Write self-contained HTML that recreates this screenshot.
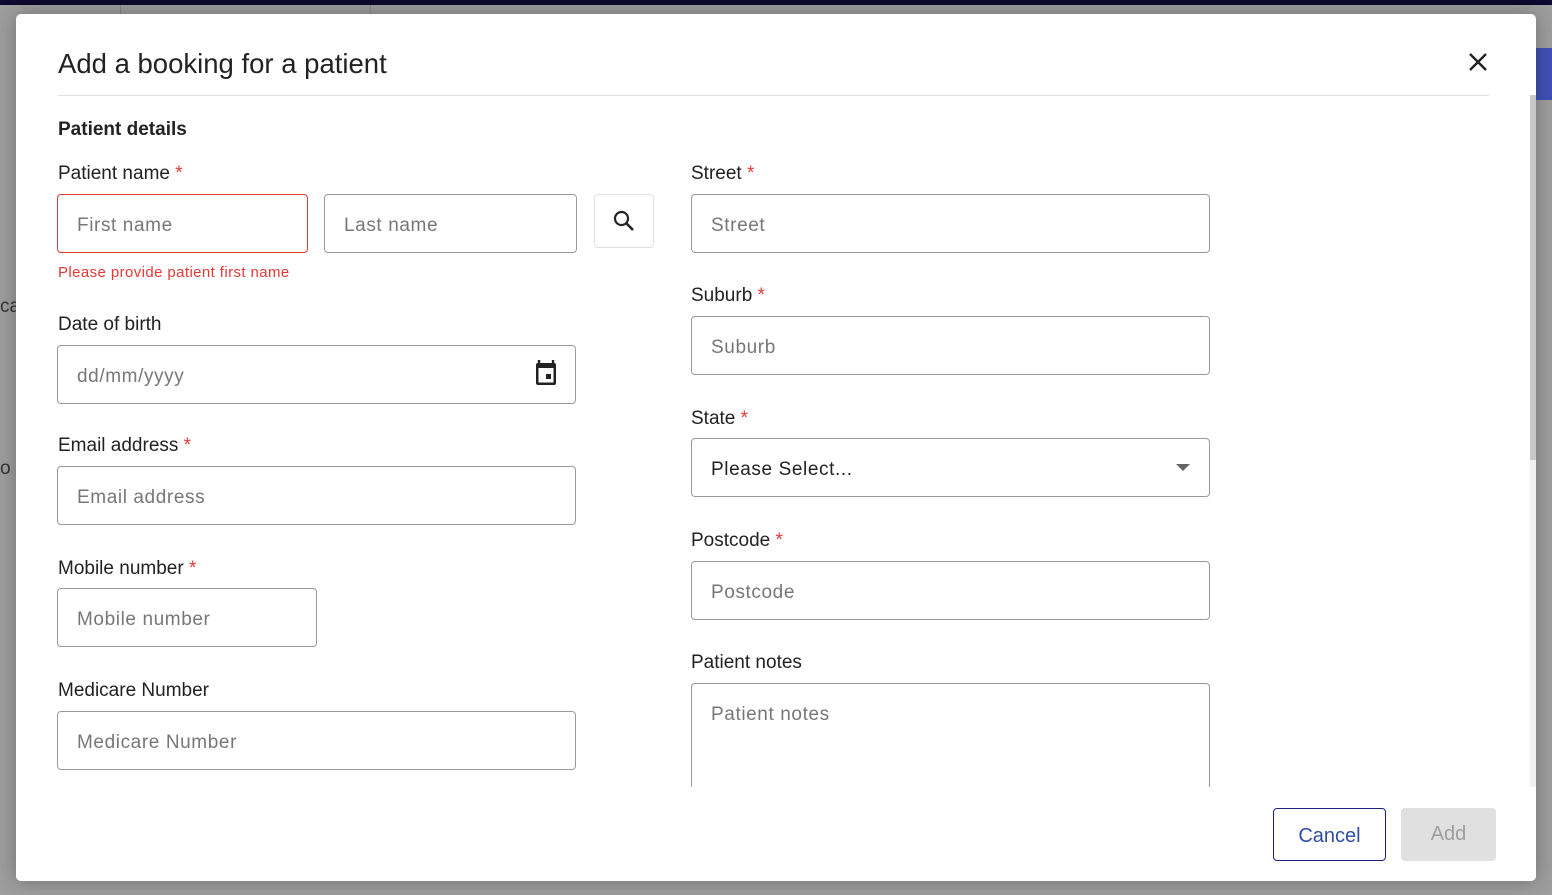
<!DOCTYPE html>
<html><head><style>
*{box-sizing:border-box;margin:0;padding:0}
body{width:1552px;height:895px;overflow:hidden;background:#9e9e9e;font-family:"Liberation Sans",sans-serif;position:relative}
.a{position:absolute}
.lbl{position:absolute;font-size:19px;color:#222;transform:translateY(2px)}
.req{color:#e53935}
.in{position:absolute;border:1px solid #9a9a9a;border-radius:4px;height:59px;font-size:19px;color:#777;padding-left:19px;line-height:61px;letter-spacing:.6px;background:#fff}
</style></head><body>
<div class="a" style="left:0;top:0;width:1552px;height:5px;background:#0a0a2e"></div>
<div class="a" style="left:120px;top:5px;width:1px;height:10px;background:#888"></div>
<div class="a" style="left:370px;top:5px;width:1px;height:10px;background:#888"></div>
<div class="a" style="left:1536px;top:48px;width:16px;height:52px;background:#3f51b5"></div>
<div class="a" style="left:0;top:296px;font-size:19px;color:#333">ca</div>
<div class="a" style="left:0;top:458px;font-size:19px;color:#333">o</div>
<div class="a" style="left:16px;top:14px;width:1520px;height:867px;background:#fff;border-radius:5px;box-shadow:0 0 20px rgba(0,0,0,.3)">
  <div class="a" style="left:42px;top:34px;font-size:27.5px;color:#222">Add a booking for a patient</div>
  <svg class="a" style="left:1451px;top:37px" width="22" height="22" viewBox="0 0 22 22"><path d="M3 3L19 19M19 3L3 19" stroke="#222" stroke-width="2.4"/></svg>
  <div class="a" style="left:42px;top:81px;width:1431px;height:1px;background:#e0e0e0"></div>
  <div class="a" style="left:1514px;top:81px;width:6px;height:692px;background:#f1f1f1"></div>
  <div class="a" style="left:1514px;top:81px;width:6px;height:365px;background:#c8c8c8"></div>
  <div class="a" style="left:42px;top:105px;font-size:19px;font-weight:bold;color:#222">Patient details</div>

  <div class="lbl" style="left:42px;top:147px">Patient name <span class="req">*</span></div>
  <div class="in" style="left:41px;top:180px;width:251px;border-color:#e53935">First name</div>
  <div class="in" style="left:308px;top:180px;width:253px">Last name</div>
  <div class="a" style="left:578px;top:180px;width:60px;height:54px;border:1px solid #e0e0e0;border-radius:4px"></div>
  <svg class="a" style="left:596px;top:195px" width="24" height="24" viewBox="0 0 24 24"><circle cx="9.5" cy="9.5" r="6.5" stroke="#222" stroke-width="2.2" fill="none"/><path d="M14 14L21 21" stroke="#222" stroke-width="2.6"/></svg>
  <div class="a" style="left:42px;top:250px;font-size:15px;color:#e53935;letter-spacing:.4px">Please provide patient first name</div>

  <div class="lbl" style="left:42px;top:298px">Date of birth</div>
  <div class="in" style="left:41px;top:331px;width:519px">dd/mm/yyyy</div>
  <svg class="a" style="left:518px;top:345px" width="24" height="28" viewBox="0 0 24 28"><path d="M5 1v4M19 1v4" stroke="#222" stroke-width="2.4"/><rect x="2" y="4" width="20" height="22" rx="2" fill="#222"/><rect x="4.5" y="9" width="15" height="14.5" fill="#fff"/><rect x="12" y="15" width="5" height="5" fill="#222"/></svg>

  <div class="lbl" style="left:42px;top:419px">Email address <span class="req">*</span></div>
  <div class="in" style="left:41px;top:452px;width:519px">Email address</div>
  <div class="lbl" style="left:42px;top:542px">Mobile number <span class="req">*</span></div>
  <div class="in" style="left:41px;top:574px;width:260px">Mobile number</div>
  <div class="lbl" style="left:42px;top:664px">Medicare Number</div>
  <div class="in" style="left:41px;top:697px;width:519px">Medicare Number</div>

  <div class="lbl" style="left:675px;top:147px">Street <span class="req">*</span></div>
  <div class="in" style="left:675px;top:180px;width:519px">Street</div>
  <div class="lbl" style="left:675px;top:269px">Suburb <span class="req">*</span></div>
  <div class="in" style="left:675px;top:302px;width:519px">Suburb</div>
  <div class="lbl" style="left:675px;top:392px">State <span class="req">*</span></div>
  <div class="in" style="left:675px;top:424px;width:519px;color:#222">Please Select...</div>
  <svg class="a" style="left:1160px;top:450px" width="14" height="8"><path d="M0 0H14L7 7Z" fill="#666"/></svg>
  <div class="lbl" style="left:675px;top:514px">Postcode <span class="req">*</span></div>
  <div class="in" style="left:675px;top:547px;width:519px">Postcode</div>
  <div class="lbl" style="left:675px;top:636px">Patient notes</div>
  <div class="in" style="left:675px;top:669px;width:519px;height:120px;line-height:20px;padding-top:21px;border-bottom:none;border-radius:4px 4px 0 0">Patient notes</div>
  <div class="a" style="left:0;top:773px;width:1520px;height:94px;background:#fff;border-radius:0 0 5px 5px"></div>

  <div class="a" style="left:1257px;top:794px;width:113px;height:53px;border:1px solid #1a237e;border-radius:4px;color:#2f4ea0;font-size:20px;text-align:center;line-height:55px">Cancel</div>
  <div class="a" style="left:1385px;top:794px;width:95px;height:53px;background:#e0e0e0;border-radius:4px;color:#9e9e9e;font-size:20px;text-align:center;line-height:53px">Add</div>
</div>
</body></html>
